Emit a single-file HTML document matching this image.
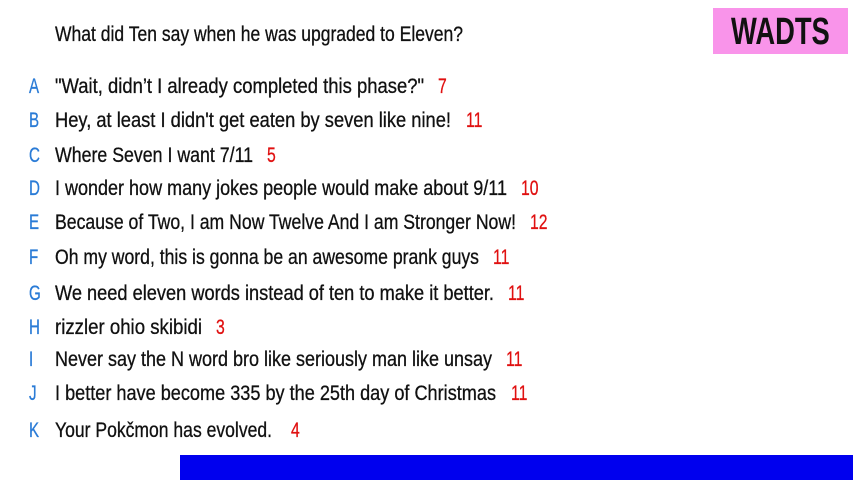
<!DOCTYPE html>
<html><head><meta charset="utf-8"><style>
body{margin:0;width:853px;height:480px;background:#fff;position:relative;overflow:hidden;font-family:"Liberation Sans",sans-serif;}
.t{position:absolute;font-size:21px;line-height:20px;color:#111;white-space:nowrap;transform-origin:0 50%;transform:scaleX(0.75);-webkit-text-stroke:0.3px #111;}
.l{position:absolute;left:29px;font-size:21px;line-height:20px;color:#2a7bd6;transform:scaleX(0.72);transform-origin:0 50%;-webkit-text-stroke:0.3px #2a7bd6;}
.n{position:absolute;font-size:21px;line-height:20px;color:#e01010;transform:scaleX(0.75);transform-origin:0 50%;-webkit-text-stroke:0.3px #e01010;}
#box{position:absolute;left:713px;top:8px;width:135px;height:46px;background:#f994ea;}
#box span{position:absolute;left:18px;top:5px;font-size:38px;line-height:38px;font-weight:bold;color:#111;transform:scaleX(0.72);transform-origin:0 0;}
#bar{position:absolute;left:180px;top:455px;width:673px;height:25px;background:#0000ee;}
</style></head><body>
<div id="box"><span>WADTS</span></div>
<div id="bar"></div>
<div class="t" style="left:55px;top:25px">What did Ten say when he was upgraded to Eleven?</div>

<div class="l" style="top:77px">A</div><div class="t" style="left:55px;top:77px">"Wait, didn’t I already completed this phase?"</div><div class="n" style="left:438px;top:77px">7</div>
<div class="l" style="top:111px">B</div><div class="t" style="left:55px;top:111px">Hey, at least I didn't get eaten by seven like nine!</div><div class="n" style="left:466px;top:111px">11</div>
<div class="l" style="top:146px">C</div><div class="t" style="left:55px;top:146px">Where Seven I want 7/11</div><div class="n" style="left:267px;top:146px">5</div>
<div class="l" style="top:179px">D</div><div class="t" style="left:55px;top:179px">I wonder how many jokes people would make about 9/11</div><div class="n" style="left:521px;top:179px">10</div>
<div class="l" style="top:213px">E</div><div class="t" style="left:55px;top:213px">Because of Two, I am Now Twelve And I am Stronger Now!</div><div class="n" style="left:530px;top:213px">12</div>
<div class="l" style="top:248px">F</div><div class="t" style="left:55px;top:248px">Oh my word, this is gonna be an awesome prank guys</div><div class="n" style="left:493px;top:248px">11</div>
<div class="l" style="top:284px">G</div><div class="t" style="left:55px;top:284px">We need eleven words instead of ten to make it better.</div><div class="n" style="left:508px;top:284px">11</div>
<div class="l" style="top:318px">H</div><div class="t" style="left:55px;top:318px">rizzler ohio skibidi</div><div class="n" style="left:216px;top:318px">3</div>
<div class="l" style="top:350px">I</div><div class="t" style="left:55px;top:350px">Never say the N word bro like seriously man like unsay</div><div class="n" style="left:506px;top:350px">11</div>
<div class="l" style="top:384px">J</div><div class="t" style="left:55px;top:384px">I better have become 335 by the 25th day of Christmas</div><div class="n" style="left:511px;top:384px">11</div>
<div class="l" style="top:421px">K</div><div class="t" style="left:55px;top:421px">Your Pokčmon has evolved.</div><div class="n" style="left:291px;top:421px">4</div>
<script>
var ends=[463,424,451,253,507,516,479,494,202,492,496,272];
var ts=document.querySelectorAll('.t');
for(var i=0;i<ts.length;i++){ts[i].style.transform='none';var w=ts[i].getBoundingClientRect().width;ts[i].style.transform='scaleX('+((ends[i]-55)/w)+')';}
</script>
</body></html>
